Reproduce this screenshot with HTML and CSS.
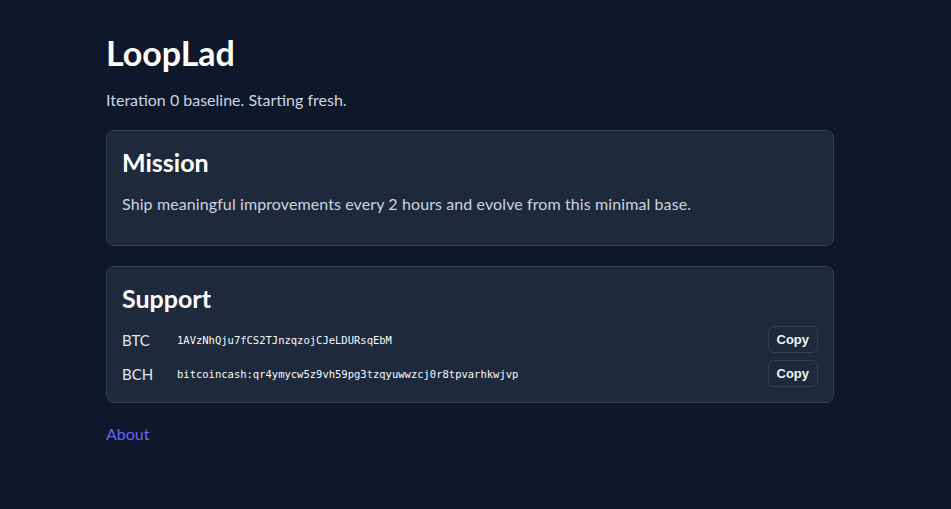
FILE: index.html
```html
<!DOCTYPE html>
<html lang="en">
<head>
    <meta charset="UTF-8">
    <meta name="viewport" content="width=device-width, initial-scale=1.0">
    <title>LoopLad</title>
    <link rel="stylesheet" href="styles.css">
</head>
<body>
    <main class="wrap">
        <h1>LoopLad</h1>
        <p class="lead">Iteration 0 baseline. Starting fresh.</p>

        <section class="card">
            <h2>Mission</h2>
            <p>Ship meaningful improvements every 2 hours and evolve from this minimal base.</p>
        </section>

        <section class="card">
            <h2>Support</h2>
            <div class="addr">
                <span class="coin">BTC</span>
                <code>1AVzNhQju7fCS2TJnzqzojCJeLDURsqEbM</code>
                <button>Copy</button>
            </div>
            <div class="addr">
                <span class="coin">BCH</span>
                <code>bitcoincash:qr4ymycw5z9vh59pg3tzqyuwwzcj0r8tpvarhkwjvp</code>
                <button>Copy</button>
            </div>
        </section>

        <a class="about" href="#">About</a>
    </main>
</body>
</html>
```

FILE: styles.css
```css
body {
    margin: 0;
    background: #0f172a;
    color: #e2e8f0;
    font-family: Lato, "Open Sans", sans-serif;
}

.wrap {
    width: 728px;
    margin-left: 106px;
    padding-top: 33px;
}

h1 {
    margin: 0;
    font-size: 34px;
    line-height: 40px;
    font-weight: 700;
    color: #fff;
}

.lead {
    margin: 15px 0 0;
    font-size: 16px;
    line-height: 24px;
    color: #cbd5e1;
}

.card {
    margin-top: 18px;
    background: #1e293b;
    border: 1px solid #334155;
    border-radius: 8px;
    padding: 15px;
}

.card + .card {
    margin-top: 20px;
}

.card h2 {
    margin: 0;
    font-size: 25px;
    line-height: 32px;
    font-weight: 700;
    color: #fff;
}

.card p {
    margin: 14px 0 14px;
    font-size: 16px;
    line-height: 24px;
    letter-spacing: 0.1px;
    color: #cbd5e1;
}

.addr {
    display: flex;
    align-items: center;
    margin-top: 12px;
}

.addr + .addr {
    margin-top: 7px;
}

.coin {
    width: 55px;
    font-size: 15px;
    color: #e2e8f0;
}

.addr code {
    flex: 1;
    font-family: "DejaVu Sans Mono", monospace;
    font-size: 10.5px;
    color: #f8fafc;
}

.addr button {
    background: #1e293b;
    border: 1px solid #334155;
    border-radius: 6px;
    color: #f1f5f9;
    font-family: "Liberation Sans", Arial, sans-serif;
    font-size: 13px;
    font-weight: 600;
    padding: 5px 8px;
    cursor: pointer;
}

.about {
    display: inline-block;
    margin-top: 21px;
    font-size: 16px;
    color: #6366f1;
    text-decoration: none;
}
```
